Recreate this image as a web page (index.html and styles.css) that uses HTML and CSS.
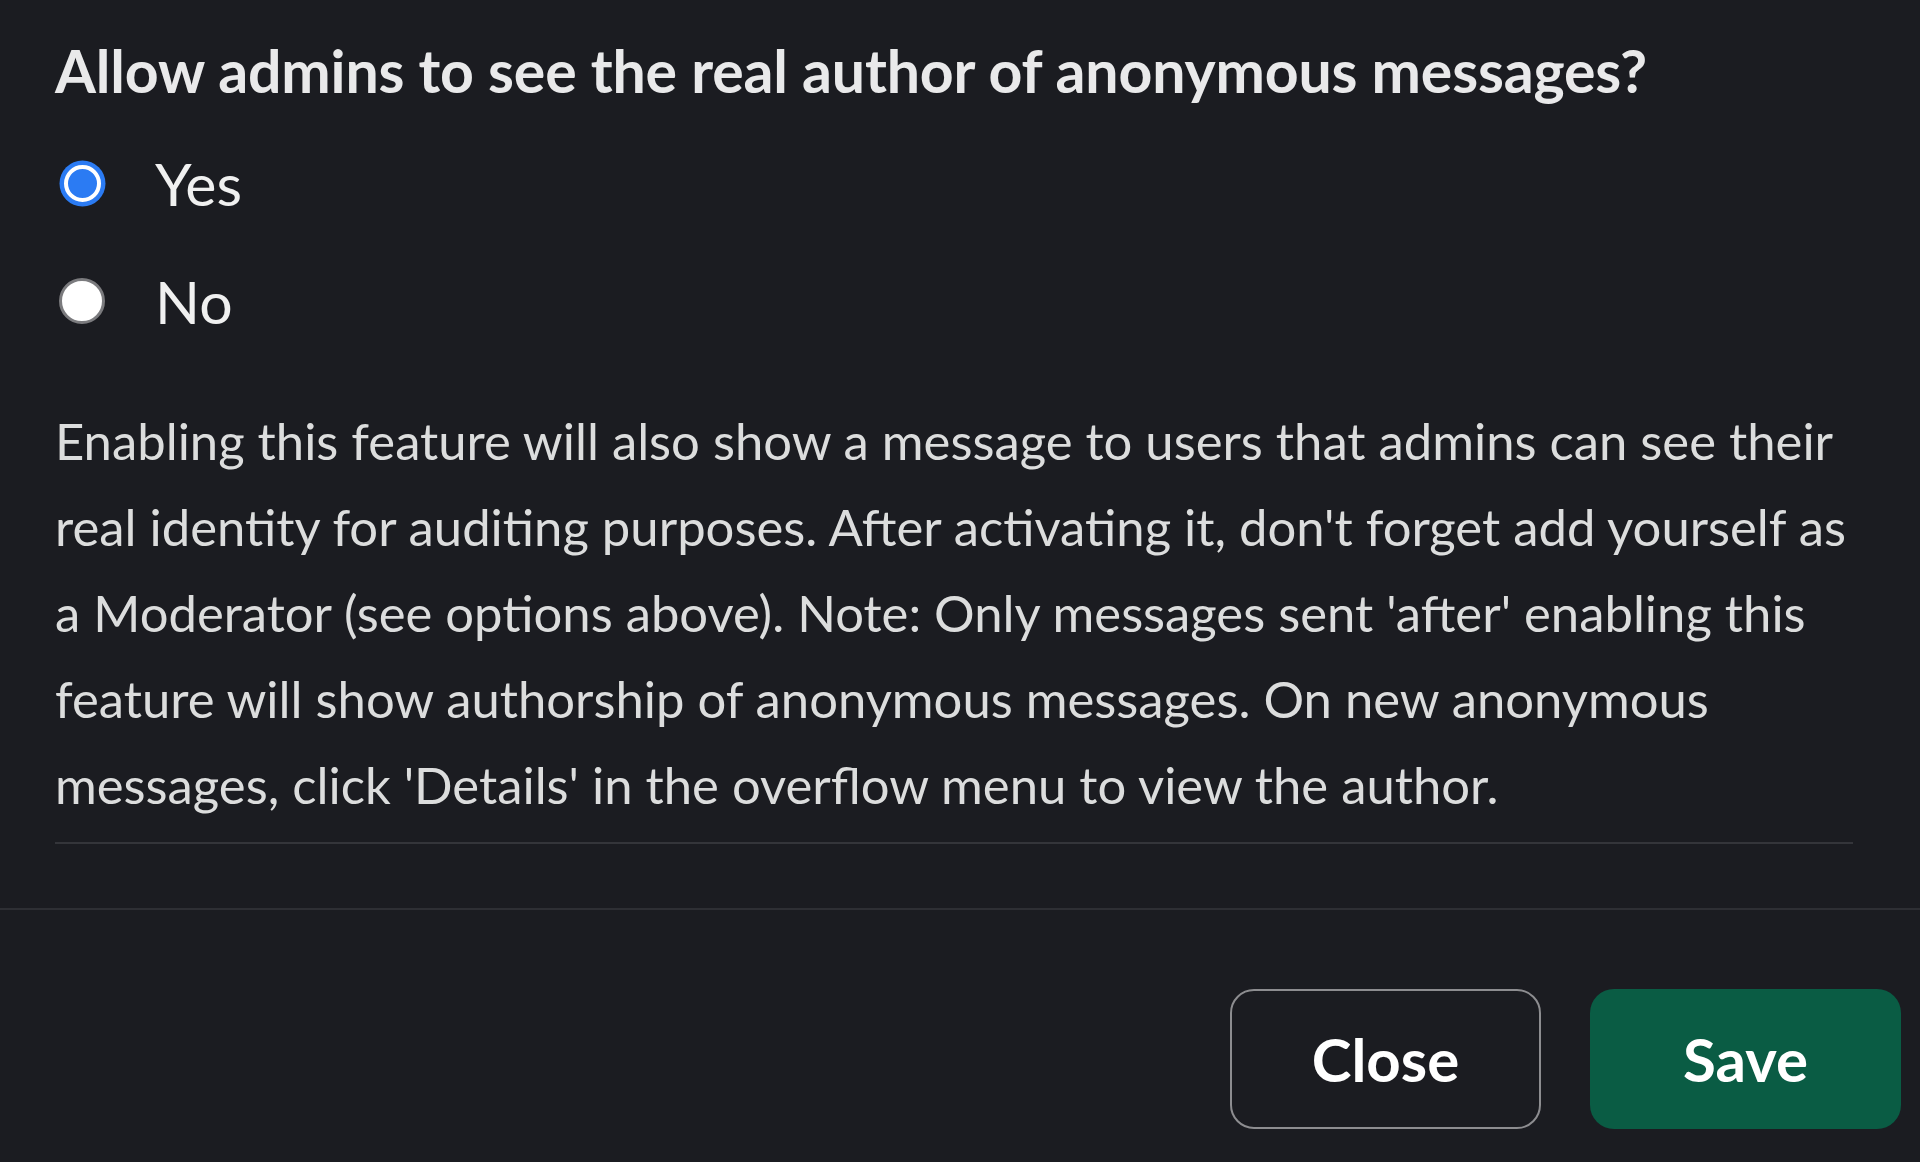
FILE: index.html
```html
<!DOCTYPE html>
<html lang="en">
<head>
<meta charset="utf-8">
<title>Anonymous messages settings</title>
<link rel="stylesheet" href="styles.css">
</head>
<body>
<div class="modal">
  <section class="body">
    <h1 class="title">Allow admins to see the real author of anonymous messages?</h1>
    <div class="options">
      <label class="option">
        <span class="radio radio-on"></span>
        <span class="option-label">Yes</span>
      </label>
      <label class="option">
        <span class="radio radio-off"></span>
        <span class="option-label">No</span>
      </label>
    </div>
    <p class="help">Enabling this feature will also show a message to users that admins can see their real identity for auditing purposes. After activating it, don't forget add yourself as a Moderator (see options above). Note: Only messages sent 'after' enabling this feature will show authorship of anonymous messages. On new anonymous messages, click 'Details' in the overflow menu to view the author.</p>
    <div class="divider"></div>
  </section>
  <footer class="footer">
    <button class="btn btn-close" type="button">Close</button>
    <button class="btn btn-save" type="button">Save</button>
  </footer>
</div>
</body>
</html>
```

FILE: styles.css
```css
html, body {
  margin: 0;
  padding: 0;
  background: #1b1c21;
}

body {
  font-family: Lato, "Noto Sans", sans-serif;
  color: #d9dadb;
  width: 1920px;
  height: 1162px;
  overflow: hidden;
}

.modal {
  display: flex;
  flex-direction: column;
}

.body {
  padding: 35px 67px 64px 55px;
  border-bottom: 2px solid #2e2f34;
}

.title {
  margin: 0;
  font-size: 59px;
  line-height: 72px;
  font-weight: 700;
  letter-spacing: -0.15px;
  color: #e9e9ea;
}

.options {
  display: flex;
  flex-direction: column;
  gap: 48px;
  margin-top: 42px;
}

.option {
  display: flex;
  align-items: center;
  height: 70px;
  padding-left: 4px;
}

.radio {
  box-sizing: border-box;
  width: 46px;
  height: 46px;
  border-radius: 50%;
  flex: none;
  margin-bottom: 2px;
}

.radio-on {
  background: #2b7bf3;
  border: 4.5px solid #ffffff;
  box-shadow: 0 0 0 4.5px #2b7bf3;
  width: 37px;
  height: 37px;
  margin-left: 4.5px;
  margin-right: 4.5px;
}

.radio-off {
  background: #ffffff;
  border: 3px solid #7b7b7e;
}

.option-label {
  margin-left: 50px;
  font-size: 59px;
  line-height: 70px;
  color: #f0f0f0;
}

.help {
  margin: 61px -8px 0 0;
  font-size: 50.8px;
  line-height: 86px;
  color: #dcdddd;
}

.divider {
  margin-top: 14px;
  height: 2px;
  background: #34353a;
}

.footer {
  display: flex;
  justify-content: flex-end;
  gap: 49px;
  padding: 79px 19px 0 0;
}

.btn {
  box-sizing: border-box;
  width: 311px;
  height: 140px;
  border-radius: 24px;
  font-family: Lato, "Noto Sans", sans-serif;
  font-size: 60px;
  font-weight: 700;
  color: #ffffff;
  cursor: pointer;
}

.btn-close {
  background: transparent;
  border: 2px solid #8d8d90;
}

.btn-save {
  background: #0a5c44;
  border: none;
}
```
